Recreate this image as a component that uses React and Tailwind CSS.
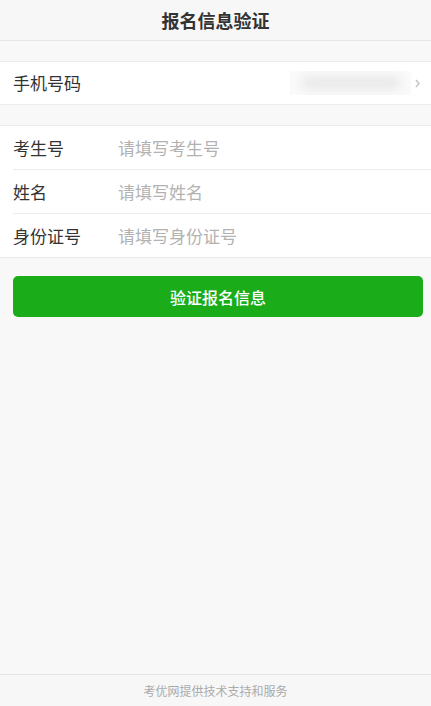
import React from 'react';

const font = { fontFamily: '"Noto Sans CJK SC", "Noto Sans", sans-serif' };

const Field = ({ label, placeholder, last }) => (
    <div className={`flex items-center pl-[13px] ${last ? 'h-[43px]' : 'h-[44px]'}`}>
        <div className={`flex h-full flex-1 items-center ${last ? '' : 'border-b border-[#ececec]'}`}>
            <span className="w-[105px] text-[17px] text-[#333]">{label}</span>
            <input
                className="flex-1 bg-transparent text-[17px] text-[#333] outline-none placeholder:text-[#b2b2b2]"
                placeholder={placeholder}
            />
        </div>
    </div>
);

export default function App() {
    return (
        <div className="flex h-[706px] w-full flex-col bg-[#f8f8f8]" style={font}>
            <div className="flex h-[41px] shrink-0 items-center justify-center border-b border-[#e5e5e5] bg-[#f7f7f7]">
                <h1 className="text-[18px] font-bold text-[#333]">报名信息验证</h1>
            </div>

            <div className="mt-[20px] flex h-[44px] items-center border-y border-[#ececec] bg-white pl-[13px] pr-[11px]">
                <span className="flex-1 text-[17px] text-[#333]">手机号码</span>
                <div className="mr-[4px] flex h-[24px] w-[121px] items-center justify-center overflow-hidden bg-[#fafafa]">
                    <div className="h-[14px] w-[100px] rounded-full bg-[#eaeaea] blur-[5px]" />
                </div>
                <svg width="5" height="9" viewBox="0 0 5 9" className="text-[#c7c7c7]">
                    <path d="M1 1l3 3.5-3 3.5" fill="none" stroke="currentColor" strokeWidth="1.6" />
                </svg>
            </div>

            <div className="mt-[20px] flex flex-col border-y border-[#ececec] bg-white">
                <Field label="考生号" placeholder="请填写考生号" />
                <Field label="姓名" placeholder="请填写姓名" />
                <Field label="身份证号" placeholder="请填写身份证号" last />
            </div>

            <div className="pl-[13px] pr-[8px] pt-[18px]">
                <button className="h-[41px] w-full rounded-[5px] bg-[#1aad19] text-[16px] font-medium text-white">
                    验证报名信息
                </button>
            </div>

            <div className="flex-1" />

            <div className="flex h-[32px] shrink-0 items-center justify-center border-t border-[#e5e5e5] bg-[#f7f7f7]">
                <span className="text-[12px] text-[#aaa]">考优网提供技术支持和服务</span>
            </div>
        </div>
    );
}
